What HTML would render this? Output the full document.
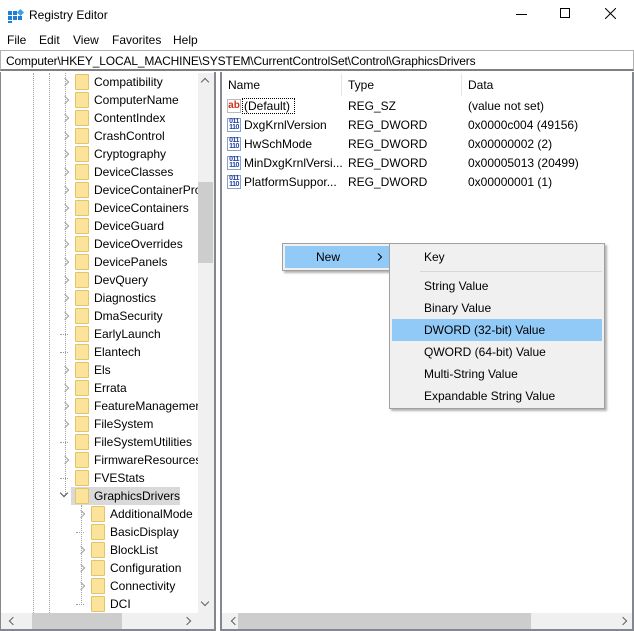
<!DOCTYPE html>
<html><head><style>
*{margin:0;padding:0;box-sizing:border-box}
body{width:634px;height:631px;background:#fff;font-family:"Liberation Sans",sans-serif;font-size:12px;color:#000;position:relative;overflow:hidden}
.a{position:absolute;white-space:nowrap}
.fold{position:absolute;width:14px;height:16px;background:#fbe39a;border:1px solid #e3c36b;border-radius:1px}
.chev{position:absolute;width:6px;height:6px;border-right:1.5px solid #a0a0a0;border-top:1.5px solid #a0a0a0;transform:rotate(45deg)}
.dl{position:absolute;border-left:1px dotted #a0a0a0}
.dh{position:absolute;border-top:1px dotted #a0a0a0;width:8px}
.ic{position:absolute;width:14px;height:14px;border:1px solid #8aa0c8;background:#fff;font-size:7px;line-height:6px;color:#2040a0;font-weight:bold;text-align:center;letter-spacing:-0.5px}
</style></head><body>
<svg class="a" style="left:8px;top:7px" width="16" height="16"><rect x="0" y="4" width="4" height="4" fill="#1e7fd6"/><rect x="5" y="4" width="4" height="4" fill="#1e7fd6"/><rect x="0" y="9" width="4" height="4" fill="#1e7fd6"/><rect x="5" y="9" width="4" height="4" fill="#1e7fd6"/><rect x="10" y="9" width="4" height="4" fill="#1e7fd6"/><rect x="0" y="14" width="4" height="2" fill="#1e7fd6"/><rect x="10" y="3" width="5" height="5" fill="#3aa0e8" transform="rotate(45 12.5 5.5)"/></svg>
<div class="a" style="left:29px;top:8px;font-size:12px">Registry Editor</div>
<div class="a" style="left:516px;top:14px;width:11px;height:1px;background:#000"></div>
<div class="a" style="left:560px;top:8px;width:10px;height:10px;border:1px solid #000"></div>
<svg class="a" style="left:605px;top:8px" width="11" height="11"><path d="M0 0L11 11M11 0L0 11" stroke="#000" stroke-width="1"/></svg>
<div class="a" style="left:7px;top:33px">File</div>
<div class="a" style="left:39px;top:33px">Edit</div>
<div class="a" style="left:73px;top:33px">View</div>
<div class="a" style="left:112px;top:33px">Favorites</div>
<div class="a" style="left:173px;top:33px">Help</div>
<div class="a" style="left:0;top:50px;width:634px;height:21px;border:1px solid #a0a0a0;border-width:1px 1px 2px 1px;border-color:#b0b0b0 #b0b0b0 #808080"></div>
<div class="a" style="left:6px;top:54px;letter-spacing:-0.15px">Computer\HKEY_LOCAL_MACHINE\SYSTEM\CurrentControlSet\Control\GraphicsDrivers</div>
<div class="a" style="left:0;top:72px;width:216px;height:559px;border-style:solid;border-width:0 2px 2px 1px;border-color:#828790"></div>
<div class="a" style="left:220px;top:72px;width:414px;height:559px;border-left:2px solid #828790;border-right:2px solid #828790;border-bottom:2px solid #828790"></div>
<div class="dl" style="left:33px;top:73px;height:540px"></div>
<div class="dl" style="left:49px;top:73px;height:540px"></div>
<div class="dl" style="left:65px;top:73px;height:423px"></div>
<div class="dl" style="left:81px;top:505px;height:100px"></div>
<div id="tree"></div>
<div class="a" style="left:198px;top:73px;width:16px;height:540px;background:#f0f0f0"></div>
<div class="a" style="left:198px;top:182px;width:15px;height:81px;background:#cdcdcd"></div>
<div class="a" style="left:202px;top:79px;width:6px;height:6px;border-left:1.5px solid #606060;border-top:1.5px solid #606060;transform:rotate(45deg)"></div>
<div class="a" style="left:202px;top:599px;width:6px;height:6px;border-right:1.5px solid #606060;border-bottom:1.5px solid #606060;transform:rotate(45deg)"></div>
<div class="a" style="left:1px;top:613px;width:213px;height:16px;background:#f0f0f0"></div>
<div class="a" style="left:32px;top:613px;width:90px;height:16px;background:#cdcdcd"></div>
<div class="a" style="left:10px;top:618px;width:6px;height:6px;border-left:1.5px solid #606060;border-bottom:1.5px solid #606060;transform:rotate(45deg)"></div>
<div class="a" style="left:184px;top:618px;width:6px;height:6px;border-right:1.5px solid #606060;border-top:1.5px solid #606060;transform:rotate(45deg)"></div>
<div class="a" style="left:222px;top:613px;width:410px;height:16px;background:#f0f0f0"></div>
<div class="a" style="left:238px;top:613px;width:293px;height:16px;background:#cdcdcd"></div>
<div class="a" style="left:232px;top:618px;width:6px;height:6px;border-left:1.5px solid #606060;border-bottom:1.5px solid #606060;transform:rotate(45deg)"></div>
<div class="a" style="left:620px;top:618px;width:6px;height:6px;border-right:1.5px solid #606060;border-top:1.5px solid #606060;transform:rotate(45deg)"></div>
<div class="a" style="left:341px;top:74px;height:22px;border-left:1px solid #e5e5e5"></div>
<div class="a" style="left:461px;top:74px;height:22px;border-left:1px solid #e5e5e5"></div>
<div class="a" style="left:228px;top:78px">Name</div>
<div class="a" style="left:348px;top:78px">Type</div>
<div class="a" style="left:468px;top:78px">Data</div>
<div class="a" style="left:227px;top:99px;width:14px;height:14px;border:1px solid #bbb;color:#d03020;font-weight:bold;font-size:10px;line-height:11px;text-align:center">ab</div>
<div class="a" style="left:242px;top:98px;width:53px;height:16px;border:1px dotted #000"></div>
<div class="a" style="left:244px;top:99px">(Default)</div>
<div class="a" style="left:348px;top:99px">REG_SZ</div>
<div class="a" style="left:468px;top:99px">(value not set)</div>
<div id="list"></div>
<div class="a" style="left:282px;top:243px;width:110px;height:28px;background:#f0f0f0;border:1px solid #a0a0a0;box-shadow:2px 2px 2px rgba(0,0,0,.3)"></div>
<div class="a" style="left:285px;top:246px;width:106px;height:22px;background:#91c9f7"></div>
<div class="a" style="left:316px;top:250px">New</div>
<svg class="a" style="left:377px;top:253px" width="6" height="8"><path d="M1 0.5L4.5 4L1 7.5" stroke="#000" fill="none" stroke-width="1"/></svg>
<div class="a" style="left:389px;top:243px;width:216px;height:166px;background:#f0f0f0;border:1px solid #a0a0a0;box-shadow:2px 2px 2px rgba(0,0,0,.3)"></div>
<div class="a" style="left:420px;top:271px;width:182px;height:1px;background:#d7d7d7"></div>
<div class="a" style="left:392px;top:319px;width:210px;height:22px;background:#91c9f7"></div>
<div class="a" style="left:424px;top:250px">Key</div>
<div class="a" style="left:424px;top:279px">String Value</div>
<div class="a" style="left:424px;top:301px">Binary Value</div>
<div class="a" style="left:424px;top:323px">DWORD (32-bit) Value</div>
<div class="a" style="left:424px;top:345px">QWORD (64-bit) Value</div>
<div class="a" style="left:424px;top:367px">Multi-String Value</div>
<div class="a" style="left:424px;top:389px">Expandable String Value</div>
<script>
var t=[["Compatibility",1],["ComputerName",1],["ContentIndex",1],["CrashControl",1],["Cryptography",1],["DeviceClasses",1],["DeviceContainerPro",1],["DeviceContainers",1],["DeviceGuard",1],["DeviceOverrides",1],["DevicePanels",1],["DevQuery",1],["Diagnostics",1],["DmaSecurity",1],["EarlyLaunch",0],["Elantech",0],["Els",1],["Errata",1],["FeatureManagemer",1],["FileSystem",1],["FileSystemUtilities",0],["FirmwareResources",1],["FVEStats",0],["GraphicsDrivers",2]];
var c=[["AdditionalMode",1],["BasicDisplay",0],["BlockList",1],["Configuration",1],["Connectivity",1],["DCI",0]];
var h="";
function row(n,k,y,x){
 var r="";
 if(k==1)r+='<div class="chev" style="left:'+(x-14)+'px;top:'+(y+6)+'px"></div>';
 else if(k==2)r+='<div class="a" style="left:'+(x-15)+'px;top:'+(y+3)+'px;width:6px;height:6px;border-right:1.5px solid #505050;border-bottom:1.5px solid #505050;transform:rotate(45deg)"></div>';
 else r+='<div class="dh" style="left:'+(x-16)+'px;top:'+(y+9)+'px"></div>';
 if(k==2)r+='<div class="a" style="left:'+(x-5)+'px;top:'+y+'px;width:109px;height:18px;background:#d9d9d9"></div>';
 r+='<div class="fold" style="left:'+(x-1)+'px;top:'+(y+1)+'px"></div>';
 r+='<div class="a" style="left:'+(x+18)+'px;top:'+(y+2)+'px">'+n+'</div>';
 return r;}
t.forEach(function(e,i){h+=row(e[0],e[1],73+i*18,76)});
c.forEach(function(e,i){h+=row(e[0],e[1],505+i*18,92)});
document.getElementById("tree").innerHTML=h;
var l=[["DxgKrnlVersion","0x0000c004 (49156)"],["HwSchMode","0x00000002 (2)"],["MinDxgKrnlVersi...","0x00005013 (20499)"],["PlatformSuppor...","0x00000001 (1)"]];
h="";
l.forEach(function(e,i){var y=118+i*19;
h+='<div class="ic" style="left:227px;top:'+y+'px">011<br>110</div><div class="a" style="left:244px;top:'+y+'px">'+e[0]+'</div><div class="a" style="left:348px;top:'+y+'px">REG_DWORD</div><div class="a" style="left:468px;top:'+y+'px">'+e[1]+'</div>';});
document.getElementById("list").innerHTML=h;
</script>
</body></html>
